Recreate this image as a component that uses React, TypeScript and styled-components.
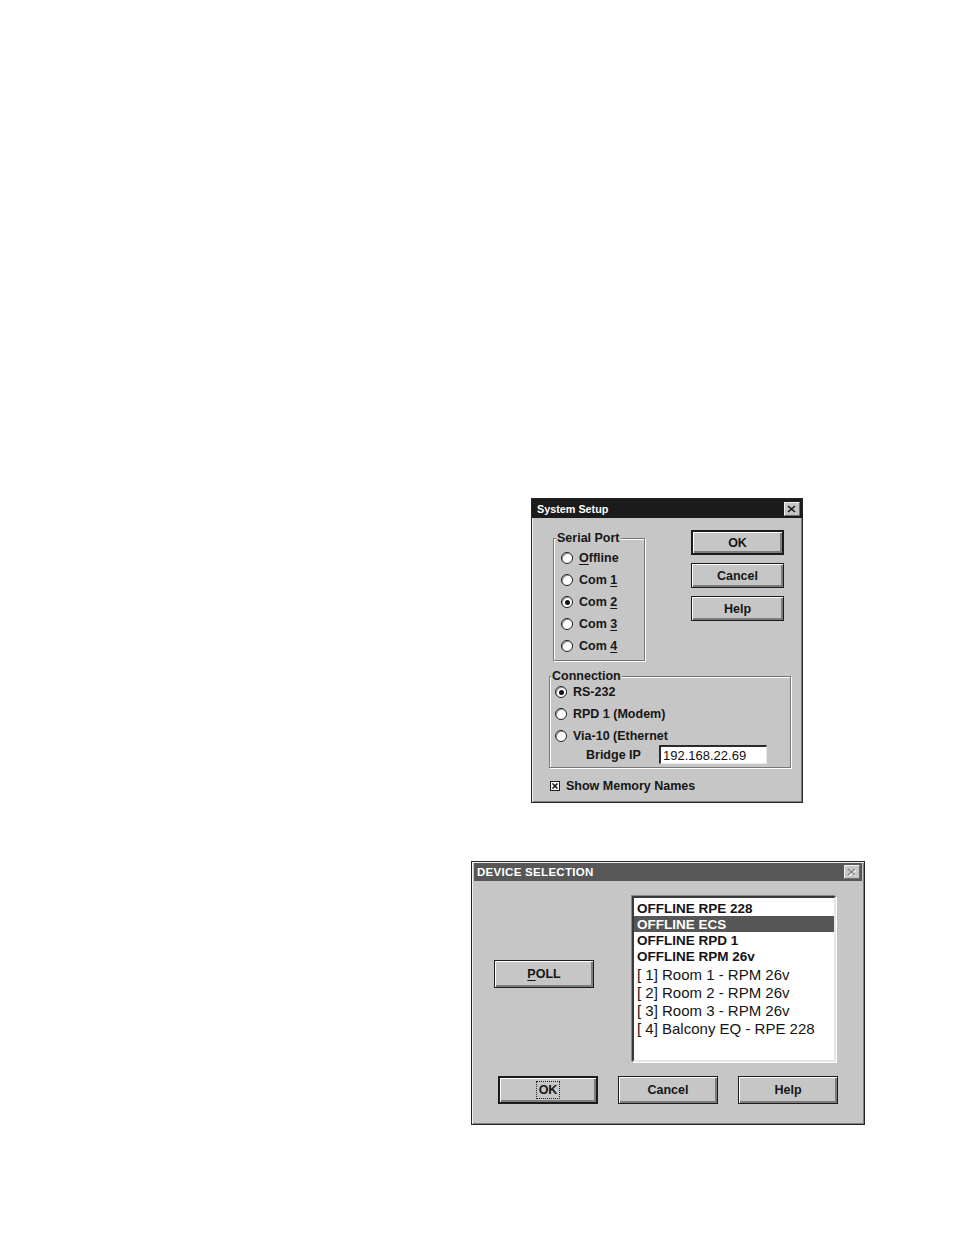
import styled, { createGlobalStyle } from "styled-components";

const GlobalStyle = createGlobalStyle`
  html, body {
    margin: 0;
    padding: 0;
    background: #ffffff;
  }
  body {
    font-family: "Liberation Sans", Arial, sans-serif;
    color: #161616;
  }
`;

const Page = styled.div`
  width: 954px;
  height: 1235px;
  overflow: hidden;
  display: flex;
  flex-direction: column;
  align-items: flex-start;
`;

const Window = styled.div<{ $left: number; $top: number; $w: number; $h: number }>`
  margin-left: ${(p) => p.$left}px;
  margin-top: ${(p) => p.$top}px;
  width: ${(p) => p.$w}px;
  height: ${(p) => p.$h}px;
  box-sizing: border-box;
  background: #c6c6c6;
  border: 1px solid #262626;
  box-shadow: inset 1px 1px 0 #f2f2f2, inset -1px -1px 0 #7e7e7e;
  display: flex;
  flex-direction: column;
`;

const TitleBar = styled.div<{ $dim?: boolean }>`
  height: ${(p) => (p.$dim ? 18 : 19)}px;
  margin: ${(p) => (p.$dim ? "1px 2px 0 2px" : "0")};
  background: ${(p) => (p.$dim ? "#575757" : "#1b1b1b")};
  display: flex;
  align-items: center;
  justify-content: space-between;
  padding: 0 2px 0 ${(p) => (p.$dim ? 3 : 5)}px;
  color: #ffffff;
  font-weight: bold;
  font-size: ${(p) => (p.$dim ? 11.5 : 10.8)}px;
  letter-spacing: ${(p) => (p.$dim ? 0.3 : 0)}px;
`;

const CloseBox = styled.span<{ $dim?: boolean }>`
  width: 16px;
  height: 14px;
  box-sizing: border-box;
  background: #c6c6c6;
  border-top: 1px solid #f2f2f2;
  border-left: 1px solid #f2f2f2;
  border-right: 1px solid #6a6a6a;
  border-bottom: 1px solid #6a6a6a;
  display: flex;
  align-items: center;
  justify-content: center;
  color: ${(p) => (p.$dim ? "#8a8a8a" : "#1b1b1b")};
`;

const CloseIcon = ({ dim }: { dim?: boolean }) => (
  <CloseBox $dim={dim}>
    <svg width="10" height="8" viewBox="0 0 10 8">
      {dim && <path d="M2 2 L9 8 M9 2 L2 8" stroke="#f4f4f4" strokeWidth="1.6" />}
      <path d="M1 1 L8 7 M8 1 L1 7" stroke="currentColor" strokeWidth="1.6" />
    </svg>
  </CloseBox>
);

/* ---------- System Setup ---------- */

const SetupBody = styled.div`
  padding: 12px 0 0 17px;
  display: flex;
  flex-direction: column;
  font-size: 12.5px;
  font-weight: bold;
`;

const TopRow = styled.div`
  display: flex;
  align-items: flex-start;
`;

const Group = styled.div<{ $w: number; $h: number; $mt: number; $ml: number; $pt: number }>`
  position: relative;
  width: ${(p) => p.$w}px;
  height: ${(p) => p.$h}px;
  margin-top: ${(p) => p.$mt}px;
  margin-left: ${(p) => p.$ml}px;
  padding-top: ${(p) => p.$pt}px;
  box-sizing: border-box;
  border: 1px solid #777777;
  box-shadow: 1px 1px 0 #ffffff, inset 1px 1px 0 #ffffff;
  display: flex;
  flex-direction: column;
`;

const Caption = styled.span<{ $left: number }>`
  position: absolute;
  top: -8px;
  left: ${(p) => p.$left}px;
  padding: 0 1px;
  line-height: 14px;
  background: #c6c6c6;
`;

const OptionRow = styled.label<{ $h: number; $pl: number }>`
  height: ${(p) => p.$h}px;
  padding-left: ${(p) => p.$pl}px;
  display: flex;
  align-items: center;
  gap: 6px;
  white-space: nowrap;
`;

const Radio = styled.span<{ $on?: boolean }>`
  position: relative;
  flex: none;
  width: 12px;
  height: 12px;
  box-sizing: border-box;
  border-radius: 50%;
  border: 1px solid #1d1d1d;
  background: #ffffff;
  box-shadow: inset 1px 1px 0 #9a9a9a;
  &::after {
    content: "";
    position: absolute;
    inset: 2.5px;
    border-radius: 50%;
    background: #111111;
    display: ${(p) => (p.$on ? "block" : "none")};
  }
`;

const Key = styled.span`
  text-decoration: underline;
  text-underline-offset: 2px;
`;

const ButtonColumn = styled.div`
  margin-left: 46px;
  display: flex;
  flex-direction: column;
  gap: 8px;
`;

const Button = styled.button<{ $w: number; $h: number; $default?: boolean }>`
  width: ${(p) => p.$w}px;
  height: ${(p) => p.$h}px;
  box-sizing: border-box;
  padding: 0;
  background: #c6c6c6;
  border: ${(p) => (p.$default ? 2 : 1)}px solid #1b1b1b;
  box-shadow: inset 1px 1px 0 #ffffff, inset -2px -2px 0 #7c7c7c;
  font-family: "Liberation Sans", Arial, sans-serif;
  font-weight: bold;
  font-size: 12.5px;
  color: #161616;
  display: flex;
  align-items: center;
  justify-content: center;
`;

const Focus = styled.span`
  outline: 1px dotted #222222;
  outline-offset: 1px;
  padding: 0 1px;
`;

const BridgeRow = styled.div`
  height: 19px;
  margin-top: -2px;
  padding-left: 36px;
  display: flex;
  align-items: center;
`;

const BridgeLabel = styled.span`
  width: 73px;
  flex: none;
`;

const IpField = styled.div`
  width: 108px;
  height: 19px;
  box-sizing: border-box;
  background: #ffffff;
  border-top: 2px solid #2a2a2a;
  border-left: 2px solid #2a2a2a;
  border-right: 1px solid #e8e8e8;
  border-bottom: 1px solid #e8e8e8;
  padding-left: 2px;
  display: flex;
  align-items: center;
  font-weight: normal;
  font-size: 13px;
  color: #111111;
`;

const CheckRow = styled.label`
  height: 16px;
  margin-top: 10px;
  padding-left: 1px;
  display: flex;
  align-items: center;
  gap: 6px;
`;

const CheckBox = styled.span`
  width: 10px;
  height: 10px;
  box-sizing: border-box;
  border: 1px solid #1b1b1b;
  background: #ffffff;
  display: flex;
  align-items: center;
  justify-content: center;
`;

/* ---------- Device Selection ---------- */

const DeviceBody = styled.div`
  padding: 15px 0 0 22px;
  display: flex;
  flex-direction: column;
`;

const DeviceRow = styled.div`
  display: flex;
  align-items: flex-start;
`;

const PollColumn = styled.div`
  width: 138px;
  padding-top: 64px;
`;

const ListBox = styled.div`
  width: 204px;
  height: 166px;
  box-sizing: border-box;
  background: #ffffff;
  border-top: 2px solid #3a3a3a;
  border-left: 2px solid #3a3a3a;
  border-right: 2px solid #e6e6e6;
  border-bottom: 2px solid #e6e6e6;
  box-shadow: -1px -1px 0 #8a8a8a, 1px 1px 0 #ffffff;
  padding-top: 2px;
  display: flex;
  flex-direction: column;
`;

const ListItem = styled.div<{ $bold?: boolean; $selected?: boolean }>`
  height: ${(p) => (p.$bold ? 16 : 18)}px;
  padding-left: 3px;
  display: flex;
  align-items: center;
  white-space: nowrap;
  font-size: ${(p) => (p.$bold ? 13.5 : 15)}px;
  font-weight: ${(p) => (p.$bold ? "bold" : "normal")};
  background: ${(p) => (p.$selected ? "#565656" : "transparent")};
  color: ${(p) => (p.$selected ? "#ffffff" : "#141414")};
  &:nth-child(5) {
    margin-top: 1px;
  }
`;

const BottomButtons = styled.div`
  margin: 14px 0 0 4px;
  display: flex;
  gap: 20px;
`;

const devices = [
  { label: "OFFLINE RPE 228", bold: true },
  { label: "OFFLINE ECS", bold: true, selected: true },
  { label: "OFFLINE RPD 1", bold: true },
  { label: "OFFLINE RPM 26v", bold: true },
  { label: "[ 1] Room 1 - RPM 26v" },
  { label: "[ 2] Room 2 - RPM 26v" },
  { label: "[ 3] Room 3 - RPM 26v" },
  { label: "[ 4] Balcony EQ - RPE 228" },
];

const ports = [
  { pre: "", key: "O", post: "ffline" },
  { pre: "Com ", key: "1", post: "" },
  { pre: "Com ", key: "2", post: "", on: true },
  { pre: "Com ", key: "3", post: "" },
  { pre: "Com ", key: "4", post: "" },
];

export default function App() {
  return (
    <>
      <GlobalStyle />
      <Page>
        <Window $left={531} $top={498} $w={272} $h={305}>
          <TitleBar>
            <span>System Setup</span>
            <CloseIcon />
          </TitleBar>
          <SetupBody>
            <TopRow>
              <Group $w={92} $h={123} $mt={8} $ml={4} $pt={8}>
                <Caption $left={2}>Serial Port</Caption>
                {ports.map((p) => (
                  <OptionRow key={p.key} $h={22} $pl={7}>
                    <Radio $on={p.on} />
                    <span>
                      {p.pre}
                      <Key>{p.key}</Key>
                      {p.post}
                    </span>
                  </OptionRow>
                ))}
              </Group>
              <ButtonColumn>
                <Button $w={93} $h={25} $default>OK</Button>
                <Button $w={93} $h={25}>Cancel</Button>
                <Button $w={93} $h={25}>Help</Button>
              </ButtonColumn>
            </TopRow>
            <Group $w={242} $h={92} $mt={15} $ml={0} $pt={4}>
              <Caption $left={1}>Connection</Caption>
              <OptionRow $h={22} $pl={5}>
                <Radio $on />
                <span>RS-232</span>
              </OptionRow>
              <OptionRow $h={22} $pl={5}>
                <Radio />
                <span>RPD 1 (Modem)</span>
              </OptionRow>
              <OptionRow $h={22} $pl={5}>
                <Radio />
                <span>Via-10 (Ethernet</span>
              </OptionRow>
              <BridgeRow>
                <BridgeLabel>Bridge IP</BridgeLabel>
                <IpField>192.168.22.69</IpField>
              </BridgeRow>
            </Group>
            <CheckRow>
              <CheckBox>
                <svg width="6" height="6" viewBox="0 0 6 6">
                  <path d="M0.5 0.5 L5.5 5.5 M5.5 0.5 L0.5 5.5" stroke="#111" strokeWidth="1.5" />
                </svg>
              </CheckBox>
              <span>Show Memory Names</span>
            </CheckRow>
          </SetupBody>
        </Window>

        <Window $left={471} $top={58} $w={394} $h={264}>
          <TitleBar $dim>
            <span>DEVICE SELECTION</span>
            <CloseIcon dim />
          </TitleBar>
          <DeviceBody>
            <DeviceRow>
              <PollColumn>
                <Button $w={100} $h={28}>
                  <span>
                    <Key>P</Key>OLL
                  </span>
                </Button>
              </PollColumn>
              <ListBox>
                {devices.map((d) => (
                  <ListItem key={d.label} $bold={d.bold} $selected={d.selected}>
                    {d.label}
                  </ListItem>
                ))}
              </ListBox>
            </DeviceRow>
            <BottomButtons>
              <Button $w={100} $h={28} $default>
                <Focus>OK</Focus>
              </Button>
              <Button $w={100} $h={28}>Cancel</Button>
              <Button $w={100} $h={28}>Help</Button>
            </BottomButtons>
          </DeviceBody>
        </Window>
      </Page>
    </>
  );
}
